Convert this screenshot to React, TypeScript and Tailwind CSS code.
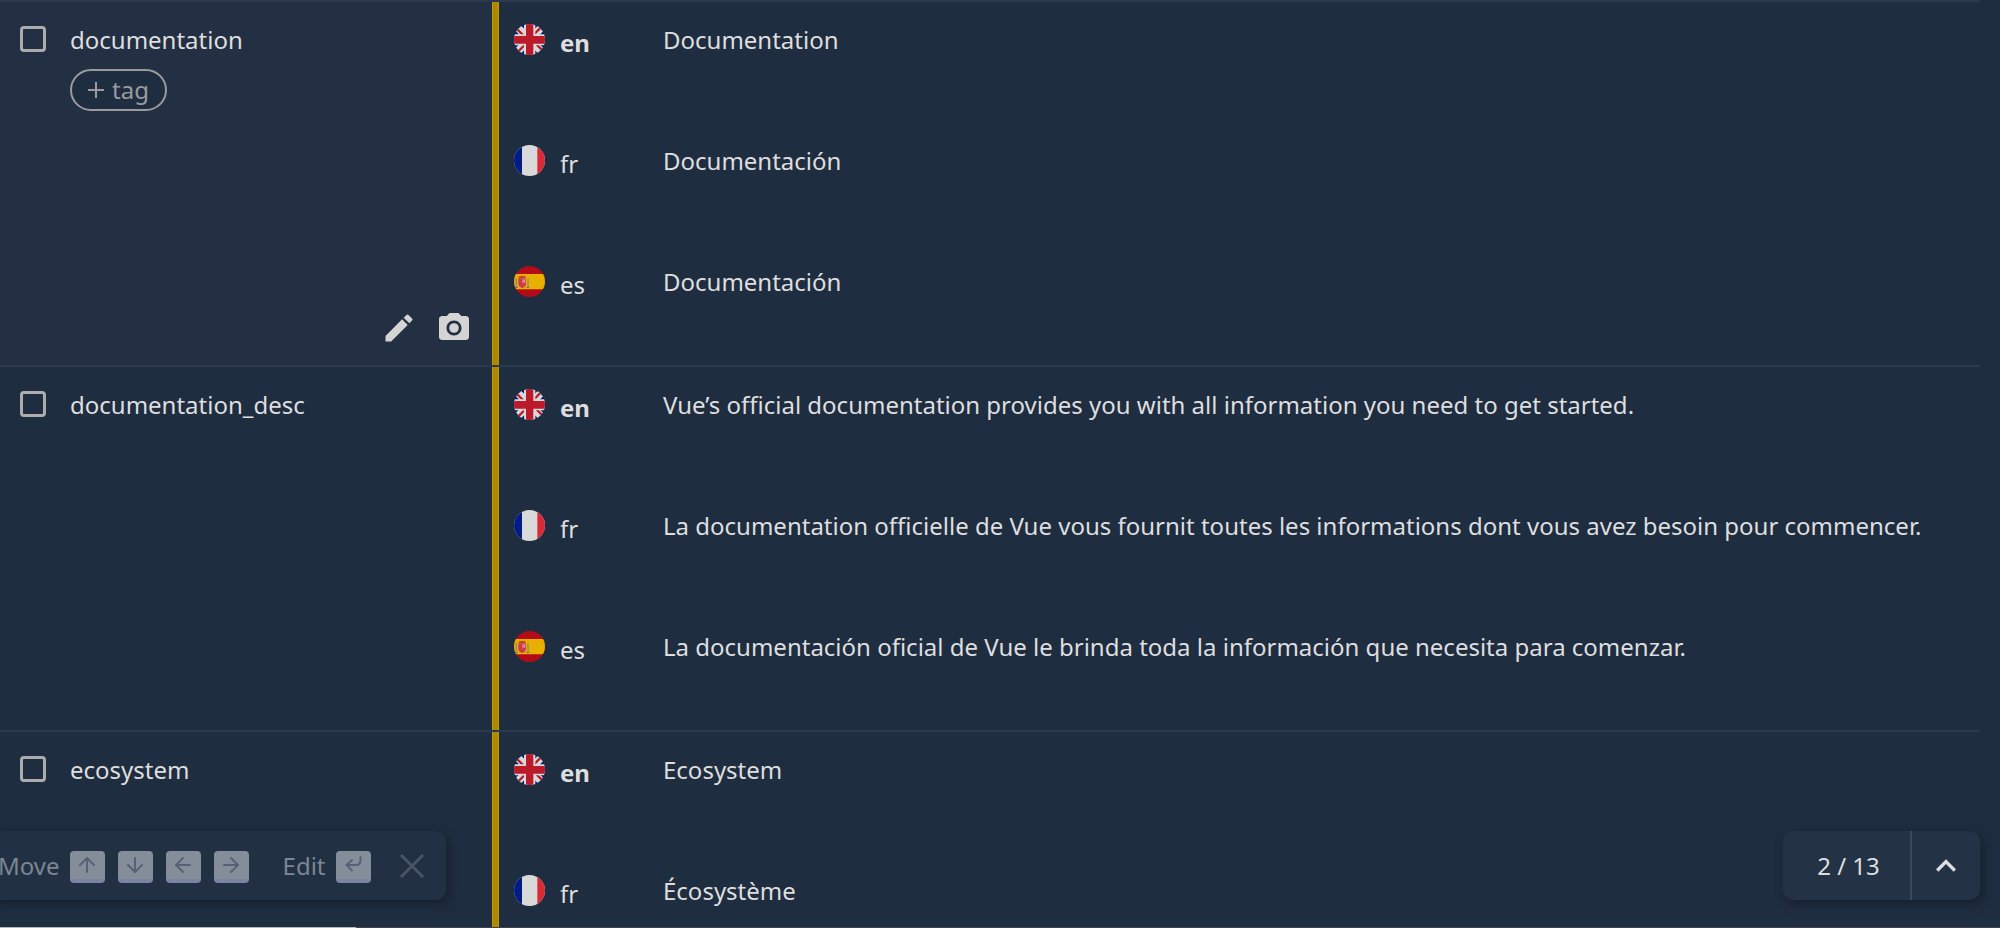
import { ArrowDown, ArrowLeft, ArrowRight, ArrowUp } from "lucide-react";
import type { ReactNode } from "react";
import { MdEdit, MdKeyboardArrowUp, MdPhotoCamera } from "react-icons/md";

type Lang = "en" | "fr" | "es";

interface Entry {
  key: string;
  active?: boolean;
  values: { lang: Lang; text: string }[];
}

const entries: Entry[] = [
  {
    key: "documentation",
    active: true,
    values: [
      { lang: "en", text: "Documentation" },
      { lang: "fr", text: "Documentación" },
      { lang: "es", text: "Documentación" },
    ],
  },
  {
    key: "documentation_desc",
    values: [
      { lang: "en", text: "Vue’s official documentation provides you with all information you need to get started." },
      { lang: "fr", text: "La documentation officielle de Vue vous fournit toutes les informations dont vous avez besoin pour commencer." },
      { lang: "es", text: "La documentación oficial de Vue le brinda toda la información que necesita para comenzar." },
    ],
  },
  {
    key: "ecosystem",
    values: [
      { lang: "en", text: "Ecosystem" },
      { lang: "fr", text: "Écosystème" },
    ],
  },
];

function FlagArt({ lang }: { lang: Lang }) {
  if (lang === "fr") {
    return (
      <>
        <path fill="#d9d9d9" d="M0 0h93v93H0z" />
        <path fill="#001d85" d="M0 0h24v93H0z" />
        <path fill="#d82a37" d="M70 0h23v93H70z" />
      </>
    );
  }
  if (lang === "es") {
    return (
      <>
        <path fill="#b30b18" d="M0 0h93v93H0z" />
        <path fill="#e8b000" d="M0 24h93v46H0z" />
        <path fill="#8f8a72" d="M5 36h4v27H5zM40 36h4v27h-4z" />
        <path fill="#77757a" d="M3 63h9v3H3zM37 63h9v3h-9z" />
        <path fill="#c8452c" d="M13 32q11-5 23 0l-3 6H15z" />
        <path fill="#cf3a4a" d="M13 38h23v16q-2 11-11 12-10-1-12-12z" />
        <path fill="#dc8a8c" d="M25 40h9v10h-9z" />
      </>
    );
  }
  return (
    <>
      <path fill="#001a72" d="M0 0h93v93H0z" />
      <path stroke="#d9d9d9" strokeWidth="23" d="M0 0l93 93M93 0L0 93" />
      <path stroke="#bb1a2b" strokeWidth="7" d="M0 6l42 42M51 45l42 42M91 0L46 45M47 48L2 93" />
      <path fill="#d9d9d9" d="M30 0h34v93H30zM0 31h93v33H0z" />
      <path fill="#bb1a2b" d="M36 0h22v93H36zM0 36h93v23H0z" />
    </>
  );
}

function Flag({ lang }: { lang: Lang }) {
  return (
    <span className="size-[31px] shrink-0 overflow-hidden rounded-full">
      <svg viewBox="0 0 93 93" className="size-full" aria-hidden="true">
        <FlagArt lang={lang} />
      </svg>
    </span>
  );
}

function EntryRow({ entry }: { entry: Entry }) {
  return (
    <li className="flex shrink-0 border-t-2 border-[#2b394f]">
      <div className={`flex w-[492px] shrink-0 flex-col justify-between ${entry.active ? "bg-[#232f42]" : ""}`}>
        <div className="flex items-start gap-6 pt-5 pl-5">
          <input
            type="checkbox"
            id={entry.key}
            className="mt-1 size-[26px] shrink-0 appearance-none rounded-[4px] border-3 border-[#acacac] checked:bg-[#acacac]"
          />
          <div className="flex flex-col items-start gap-[11px]">
            <label htmlFor={entry.key} className="leading-9">{entry.key}</label>
            {entry.active && (
              <button className="flex h-[42px] items-center gap-2 rounded-full border-2 border-[#9b9b9d] bg-[#1f2d40] px-4 text-[#9b9b9d]">
                <svg viewBox="0 0 16 16" className="size-4" stroke="currentColor" strokeWidth="2" aria-hidden="true">
                  <path d="M8 0v16M0 8h16" />
                </svg>
                tag
              </button>
            )}
          </div>
        </div>
        {entry.active && (
          <div className="flex justify-end gap-[19px] pr-5 pb-[19px] text-[#d4d4d4]">
            <button aria-label="Edit key"><MdEdit size={36} /></button>
            <button aria-label="Add screenshot"><MdPhotoCamera size={36} /></button>
          </div>
        )}
      </div>
      <div className="w-[7px] shrink-0 border-x border-[#c09a00] bg-[#ac8900]" />
      <div className="min-w-0 flex-1">
        {entry.values.map(({ lang, text }) => (
          <div key={lang} className="flex h-[121px] items-start pl-[15px]">
            <div className="flex w-[149px] shrink-0 gap-[15px] pt-[22px]">
              <Flag lang={lang} />
              <span className={lang === "en" ? "font-bold leading-[38px]" : "leading-[38px]"}>{lang}</span>
            </div>
            <p lang={lang} className="pt-5 leading-9">{text}</p>
          </div>
        ))}
      </div>
    </li>
  );
}

function Key({ children }: { children: ReactNode }) {
  return (
    <kbd className="flex h-8 w-[35px] items-start justify-center rounded-[4px] border-b-4 border-[#7d84a2] bg-[#848e9b] pt-0.5 text-[#566176]">
      {children}
    </kbd>
  );
}

export default function App() {
  return (
    <main className="relative flex h-screen flex-col overflow-hidden bg-[#1f2d40] font-['Noto_Sans',sans-serif] text-2xl text-[#dededf]">
      <ul className="mr-5 flex flex-col">
        {entries.map((entry) => (
          <EntryRow key={entry.key} entry={entry} />
        ))}
      </ul>

      <div className="absolute bottom-7 -left-2.5 flex h-[69px] items-center rounded-[10px] bg-[#223044] pr-[22px] pl-2 text-[#7d8692] shadow-[3px_4px_12px_rgba(0,0,0,0.3)]">
        <span className="mr-[10px]">Move</span>
        <div className="mr-[34px] flex gap-[13px] pt-0.5">
          <Key><ArrowUp size={24} /></Key>
          <Key><ArrowDown size={24} /></Key>
          <Key><ArrowLeft size={24} /></Key>
          <Key><ArrowRight size={24} /></Key>
        </div>
        <span className="mr-[10px]">Edit</span>
        <div className="pt-0.5">
          <Key>
            <svg viewBox="0 0 24 24" className="size-6" fill="none" stroke="currentColor" strokeWidth="2" strokeLinecap="round" aria-hidden="true">
              <path d="M11 7l-5.500 5 5.500 5.500M5.500 12H15q4.500 0 4.500-5V4" />
            </svg>
          </Key>
        </div>
        <button aria-label="Close" className="ml-[29px] text-[#4a5564]">
          <svg viewBox="0 0 24 24" className="size-6" stroke="currentColor" strokeWidth="3" aria-hidden="true">
            <path d="M1 1l22 22M23 1L1 23" />
          </svg>
        </button>
      </div>

      <div className="absolute right-5 bottom-7 flex h-[69px] rounded-[10px] bg-[#243246] shadow-[3px_4px_12px_rgba(0,0,0,0.3)]">
        <span className="flex w-[127px] items-center justify-center pl-1">2 / 13</span>
        <button aria-label="Back to top" className="flex w-[70px] items-center justify-center border-l-2 border-[#3b485b]">
          <MdKeyboardArrowUp size={40} />
        </button>
      </div>

      <div className="absolute inset-x-0 bottom-0 flex h-px bg-[#43414d]">
        <div className="w-[356px] bg-[#b5b8be]" />
      </div>
    </main>
  );
}
